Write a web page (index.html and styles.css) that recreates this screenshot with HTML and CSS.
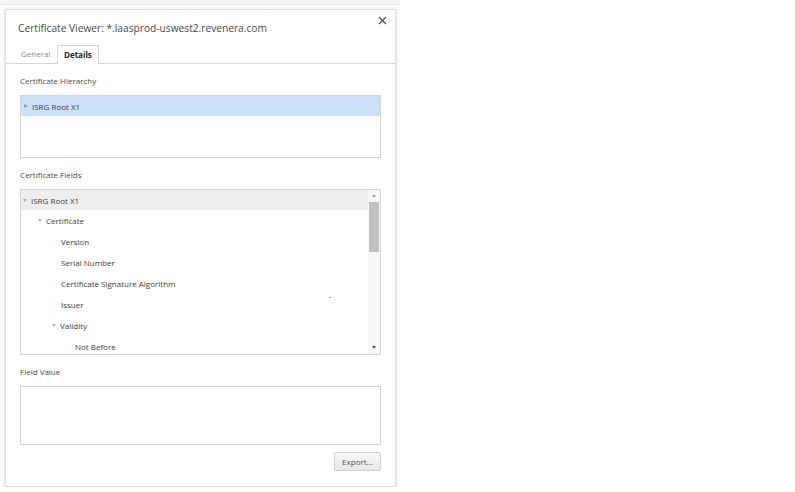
FILE: index.html
```html
<!DOCTYPE html>
<html>
<head>
<meta charset="utf-8">
<link rel="stylesheet" href="styles.css">
</head>
<body>
<div class="topstrip"></div>
<div class="dialog">
  <div class="header">
    <div class="title">Certificate Viewer: *.laasprod-uswest2.revenera.com</div>
    <div class="close">
      <svg width="9" height="9" viewBox="0 0 9 9"><path d="M1 1L8 8M8 1L1 8" stroke="#555" stroke-width="1.4"/></svg>
    </div>
  </div>
  <div class="tabs">
    <div class="tab">General</div>
    <div class="tab active">Details</div>
  </div>
  <div class="body">
    <div class="label">Certificate Hierarchy</div>
    <div class="box hier">
      <div class="row selected"><span class="tri right"></span>ISRG Root X1</div>
    </div>
    <div class="label">Certificate Fields</div>
    <div class="box fields">
      <div class="list">
        <div class="row hl lv0"><span class="tri down"></span>ISRG Root X1</div>
        <div class="row lv1"><span class="tri down"></span>Certificate</div>
        <div class="row lv2">Version</div>
        <div class="row lv2">Serial Number</div>
        <div class="row lv2">Certificate Signature Algorithm</div>
        <div class="row lv2">Issuer</div>
        <div class="row lv1b"><span class="tri down"></span>Validity</div>
        <div class="row lv3">Not Before</div>
      </div>
      <div class="scrollbar">
        <span class="arrow up"></span>
        <div class="thumb"></div>
        <div class="track"></div>
        <span class="arrow dn"></span>
      </div>
      <span class="speck"></span>
    </div>
    <div class="label">Field Value</div>
    <div class="box value"></div>
    <div class="actions">
      <button class="btn">Export...</button>
    </div>
  </div>
</div>
</body>
</html>
```
FILE: styles.css
```css
html, body {
  margin: 0;
  padding: 0;
  background: #fff;
  font-family: "Open Sans", "Noto Sans", sans-serif;
  color: #333;
}
.topstrip {
  width: 400px;
  height: 4px;
  background: #f6f6f6;
  border-bottom: 1px solid #ececec;
}
.dialog {
  margin: 4px 0 0 5px;
  width: 389px;
  height: 476px;
  border: 1px solid #dcdcdc;
  box-shadow: 0 1px 3px rgba(0,0,0,0.18);
  display: flex;
  flex-direction: column;
  background: #fff;
  position: relative;
}
.header {
  height: 35px;
  display: flex;
  align-items: flex-start;
  justify-content: space-between;
  padding: 0 8px 0 12px;
}
.title {
  font-size: 10.2px;
  color: #4a4a4a;
  margin-top: 11px;
}
.close {
  margin-top: 6px;
  width: 9px;
  height: 9px;
  display: flex;
}
.tabs {
  display: flex;
  padding-left: 10px;
  border-bottom: 1px solid #d6d6d6;
  height: 18px;
}
.tab {
  font-size: 8px;
  color: #8a8a8a;
  padding: 0 5px;
  line-height: 18px;
  width: 31px;
}
.tab.active {
  color: #222;
  font-weight: bold;
  border: 1px solid #d6d6d6;
  border-bottom: none;
  background: #fff;
  line-height: 17px;
  width: auto;
  padding: 0 6px;
  margin-bottom: -1px;
  box-sizing: border-box;
  height: 19px;
}
.body {
  padding: 0 14px 0 14px;
  display: flex;
  flex-direction: column;
}
.label {
  font-size: 8px;
  color: #4a4a4a;
  height: 31px;
  line-height: 33px;
}
.box {
  border: 1px solid #d4d4d4;
  background: #fff;
}
.hier {
  height: 61px;
}
.row {
  height: 21px;
  line-height: 21px;
  font-size: 8px;
  color: #3e3e3e;
  display: flex;
  align-items: center;
  white-space: nowrap;
}
.row.selected {
  background: #cce0f9;
  height: 20px;
  padding-left: 3px;
}
.tri {
  display: inline-block;
  width: 0;
  height: 0;
  margin-right: 4px;
}
.tri.right {
  border-top: 2.5px solid transparent;
  border-bottom: 2.5px solid transparent;
  border-left: 4px solid #9a9a9a;
}
.tri.down {
  border-left: 2.5px solid transparent;
  border-right: 2.5px solid transparent;
  border-top: 3.5px solid #b0b0b0;
}
.fields {
  height: 164px;
  display: flex;
  position: relative;
  overflow: hidden;
}
.list {
  flex: 1;
}
.row.hl {
  background: #eeeeee;
  height: 20px;
}
.lv0 { padding-left: 2px; }
.lv1 { padding-left: 17px; }
.lv1b { padding-left: 31px; }
.lv2 { padding-left: 40px; }
.lv3 { padding-left: 54px; }
.scrollbar {
  width: 12px;
  display: flex;
  flex-direction: column;
  align-items: center;
  background: #f7f7f7;
}
.arrow {
  display: block;
  width: 0;
  height: 0;
  border-left: 2.5px solid transparent;
  border-right: 2.5px solid transparent;
}
.arrow.up {
  border-bottom: 3px solid #a3a3a3;
  margin: 4px 0 5px;
}
.arrow.dn {
  border-top: 3px solid #505050;
  margin: 0 0 5px;
}
.thumb {
  width: 10px;
  height: 50px;
  background: #c1c1c1;
}
.track {
  flex: 1;
}
.speck {
  position: absolute;
  left: 309px;
  top: 107px;
  width: 1px;
  height: 1px;
  background: #666;
}
.value {
  height: 57px;
}
.actions {
  display: flex;
  justify-content: flex-end;
  padding-top: 7px;
}
.btn {
  width: 47px;
  height: 19px;
  font-family: "Open Sans", "Noto Sans", sans-serif;
  font-size: 8px;
  color: #555;
  border: 1px solid #cfcfcf;
  border-radius: 2px;
  background: linear-gradient(#f8f8f8, #e8e8e8);
  padding: 0;
  margin: 0;
}
```
